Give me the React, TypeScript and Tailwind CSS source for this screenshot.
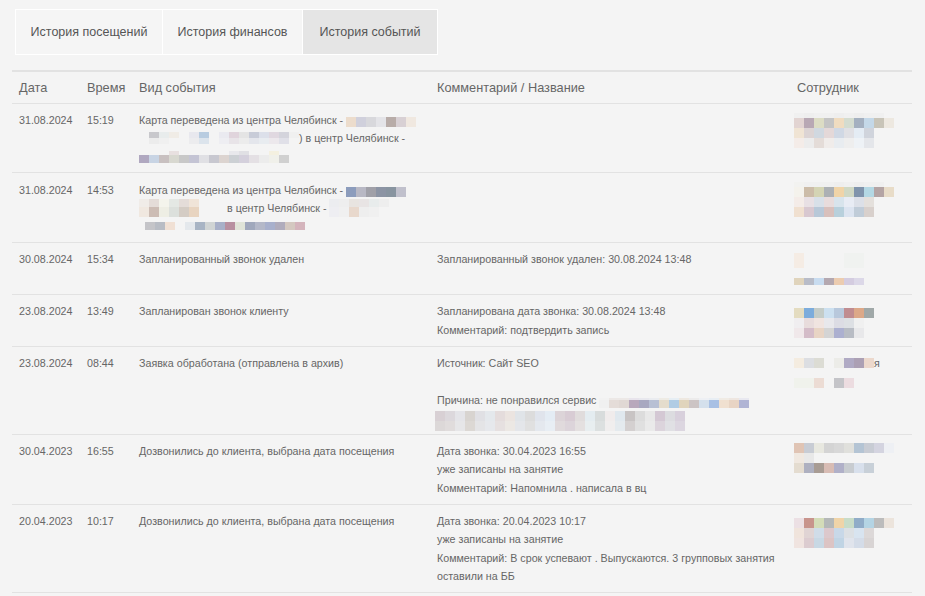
import React from "react";

type MRow = [number, string[]];

function Mosaic({ rows, className = "" }: { rows: MRow[]; className?: string }) {
  return (
    <div className={"flex flex-col shrink-0 " + className}>
      {rows.map(([h, cs], i) => (
        <div key={i} className="flex" style={{ height: h }}>
          {cs.map((c, j) => (
            <div key={j} className="w-[10px] h-full" style={{ background: c || "transparent" }} />
          ))}
        </div>
      ))}
    </div>
  );
}

function Line({ children, className = "" }: { children?: React.ReactNode; className?: string }) {
  return <div className={"flex items-center h-[18.3px] whitespace-nowrap " + className}>{children}</div>;
}

type Row = {
  date: string;
  time: string;
  event: React.ReactNode;
  comment: React.ReactNode;
  emp: React.ReactNode;
};

const rows: Row[] = [
  {
    date: "31.08.2024",
    time: "15:19",
    event: (
      <>
        <Line>
          <span>Карта переведена из центра Челябинск -&nbsp;</span>
          <Mosaic className="mt-[4px]" rows={[[10, ["#ecdccc", "#d0d0dc", "#d8d8dc", "#e4e4e8", "#b8aca8", "#d8d0d4", "#f0e8e0"]]]} />
        </Line>
        <Line>
          <Mosaic
            rows={[
              [6, ["", "#c8c8cc", "#e8ecec", "#f0ece6", "", "#e8e8ee", "#b8cce0", "", "#eaeaf0", "#e0d4dc", "#e4e4e4", "#c8ccd8", "#dce0ea", "#e0d8e0", "#d4d4dc", "#f0f0f0"]],
              [6, ["", "#ececec", "#f0f0f0", "", "", "#ececee", "#dce4ec", "", "#eeeef2", "#e8e4e8", "#ececec", "#e4e6ec", "#e8ecf0", "#ece8ec", "#e0e0e8", ""]],
            ]}
          />
          <span>) в центр Челябинск -</span>
        </Line>
        <Line>
          <Mosaic
            className="mt-[2px]"
            rows={[
              [4, ["", "", "", "#e8e0e0", "", "", "", "", "", "#e8e8ec", "#e0e0e4", "", "", "#f4f0e0", ""]],
              [8, ["#b0a8c0", "#c8d4e4", "#c8c0c0", "#d8d8d0", "#c8c8c8", "#c4c4d4", "#e0e0e4", "#c8c8d0", "#dcd4d0", "#ccd0d4", "#d4d0dc", "#e4e0e4", "#ececec", "#f0f0ea", "#d0d0d0"]],
            ]}
          />
        </Line>
      </>
    ),
    comment: null,
    emp: (
      <Mosaic
        className="mt-[2px]"
        rows={[
          [5, ["#f0f0f0", "#eeeeee", "#f0f0f0", "#f0f0f0", "#eeeeee", "#f0f0f0", "#eeeeee", "#f0f0f0", "#f0f0f0", ""]],
          [10, ["#e2d4d2", "#b8a8b4", "#dcdcc4", "#c4c4c4", "#f0dcc0", "#d4dcd0", "#a4b0c0", "#c4d8e8", "#c8c4b8", "#ede8e0"]],
          [10, ["#f0e4d4", "#dcd4d4", "#d0d8e0", "#e4d8d8", "#d0d8e4", "#e0e0e4", "#e4ecf4", "#d0d4dc"]],
          [10, ["#f4ece8", "#ececec", "#e4dcd8", "#f0ecea", "#e8ecf0", "#eeeeee", "#eef2f6", "#e4e6ea"]],
        ]}
      />
    ),
  },
  {
    date: "31.08.2024",
    time: "14:53",
    event: (
      <>
        <Line>
          <span>Карта переведена из центра Челябинск -&nbsp;</span>
          <Mosaic className="mt-[4px]" rows={[[10, ["#8c9cbc", "#b8b8c4", "#a0a0a8", "#8c94a4", "#8894a0", "#c0c0cc"]]]} />
        </Line>
        <Line>
          <Mosaic
            rows={[
              [8, ["#f0ece8", "#e4dcd8", "#f4f4ec", "#e4e8e4", "#e4dcd8", "#f0e4d8"]],
              [10, ["#f0e8e0", "#ccbcb4", "#eeeee4", "#dce0dc", "#d4ccc4", "#e8d4c0"]],
            ]}
          />
          <span className="ml-[28px]">в центр Челябинск -</span>
          <Mosaic
            className="ml-[2px]"
            rows={[
              [8, ["#ecedf0", "#eeeeee", "#e8e4e0", "#e8e4e4", "#e8ecec", "#eeeeee"]],
              [10, ["#eeeef2", "#f0f0f0", "#e8d8cc", "#eeeeee", "#f0f0f0", ""]],
            ]}
          />
        </Line>
        <Line>
          <Mosaic
            className="ml-[6px]"
            rows={[[8, ["#c4c4c8", "#b8bcc4", "#f0e0d4", "#f4f4f4", "#e4e8ec", "#a8b4c4", "#d0d4d4", "#a8b0c8", "#b890a0", "#e0e4d8", "#a0a8bc", "#b4b8c8", "#a8b0cc", "#b0acbc", "#d4c8c0", "#d4b4bc"]]]}
          />
        </Line>
      </>
    ),
    comment: null,
    emp: (
      <Mosaic
        className="mt-[2px]"
        rows={[
          [5, ["#f2f2f0", "#f0f0f0", "#f0f0f0", "#f0f0f0", "#eeeeee", "#f0f0f0", "#eeeeee", "#f0f0f0", "#f0f0f0", ""]],
          [10, ["#f4f2ec", "#ccbca8", "#d4d4b4", "#acb0b4", "#f0d4a8", "#d0d8c4", "#8094ac", "#b4d8e4", "#b4a4a4", "#e8dcc8"]],
          [10, ["#f4ece8", "#e8e0e4", "#d8e0e8", "#e8dcdc", "#d8e4ec", "#e8ecf4", "#dce0e8", "#e4e0dc"]],
          [10, ["#f0e0d0", "#d8c8d0", "#b8c8d8", "#d8c0bc", "#b8d0dc", "#dce4f0", "#c0ccd8", "#d8d0cc"]],
        ]}
      />
    ),
  },
  {
    date: "30.08.2024",
    time: "15:34",
    event: <Line>Запланированный звонок удален</Line>,
    comment: <Line>Запланированный звонок удален: 30.08.2024 13:48</Line>,
    emp: (
      <Mosaic
        className="mt-[3px]"
        rows={[
          [15, ["#f5ece4", "", "", "", "", "#f0f2f0", "#f0f2f0"]],
          [10, []],
          [7, ["#e0d4bc", "#b8bcc8", "#c8dcf0", "#b4a8b0", "#ecccb0", "#d4cce0", "#dcd8e8"]],
          [2, []],
        ]}
      />
    ),
  },
  {
    date: "23.08.2024",
    time: "13:49",
    event: <Line>Запланирован звонок клиенту</Line>,
    comment: (
      <>
        <Line>Запланирована дата звонка: 30.08.2024 13:48</Line>
        <Line>Комментарий: подтвердить запись</Line>
      </>
    ),
    emp: (
      <Mosaic
        className="mt-[6px]"
        rows={[
          [10, ["#e4dcc0", "#7cacdc", "#c4ccc8", "#cce0f0", "#b8c8dc", "#c08c90", "#dca888", "#a0a8a8"]],
          [10, ["#f0eef0", "#e8dcdc", "#f0e4e0", "#e8e8ec", "#dcdce4", "#dde0e4", "#f0f0f0"]],
          [10, ["#f0e8ea", "#d4bcc8", "#e8d4c4", "#d4d4d4", "#acb0d0", "#b8bcc4", "#e8e8ea"]],
        ]}
      />
    ),
  },
  {
    date: "23.08.2024",
    time: "08:44",
    event: <Line>Заявка обработана (отправлена в архив)</Line>,
    comment: (
      <>
        <Line>Источник: Сайт SEO</Line>
        <Line />
        <Line>
          <span>Причина: не понравился сервис&nbsp;</span>
          <Mosaic
            className="mt-[6px]"
            rows={[
              [2, ["#f2f2f2", "#ece8e6", "#ece8e6", "#e8e4ec", "#e8e8ee", "#eaecf0", "#eeebe4", "#e6eef4", "#eee8e0", "#ecebeb", "#eef0f4", "#e8eef4", "#f0ebe4", "#eee6e0", "#e8e8f0"]],
              [8, ["#f0f0f0", "#e4dcd8", "#e0d8d4", "#b8a8bc", "#a8a8c0", "#b8c0d4", "#e4dccc", "#b0cce4", "#e0d4bc", "#ccc4c4", "#d4e0ec", "#a8c0e4", "#f0e0d0", "#e8d4c4", "#b0b4d4"]],
            ]}
          />
        </Line>
        <Line>
          <Mosaic
            className="-ml-[2px] mt-[7px]"
            rows={[
              [10, ["#d8d0d4", "#dcd8dc", "#e4e4e8", "#d8d4d0", "#e0e0e4", "#e4e8ec", "#e4dcdc", "#ebe4e0", "#e0e4e8", "#dcdcdc", "#e0e4ec", "#e4ecf4", "#dcd4d8", "#d8ccd4", "#e0dcdc", "#e4ecf0", "#d8dcdc", "#f0ecec", "#e0e8ee", "#c8c4c4", "#dcdcdc", "#e8e8e8", "#d4c8d4", "#dcdce0", "#d8d0dc"]],
              [10, ["#dcd8d8", "#e0dcdc", "#e6e6e8", "#dcd8d4", "#e4e4e6", "#e6e8ec", "#e6e0e0", "#ece8e4", "#e4e6ea", "#e0e0e0", "#e4e8ee", "#e8eef4", "#e0dadc", "#dcd4da", "#e4e0e0", "#e8eef0", "#dce0e0", "#f0eeee", "#e4eaee", "#d4d0d0", "#e0e0e0", "#eaeaea", "#dcd4dc", "#e0e0e4", "#dcd6e0"]],
            ]}
          />
        </Line>
      </>
    ),
    emp: (
      <div className="mt-[4px]">
        <div className="flex items-center h-[10px]">
          <Mosaic rows={[[10, ["#f4ece0", "#dcdee2", "#dcdcd4", "#f4f4f4", "#ecece8", "#b0aac4", "#aca0b4", "#ecd8cc"]]]} />
          <span className="leading-none">я</span>
        </div>
        <Mosaic className="mt-[10px]" rows={[[10, ["#f0f2ec", "#f0f2ec", "#ecdcd4", "#f4f4f4", "#c4c4c8", "#ecdce0"]]]} />
      </div>
    ),
  },
  {
    date: "30.04.2023",
    time: "16:55",
    event: <Line>Дозвонились до клиента, выбрана дата посещения</Line>,
    comment: (
      <>
        <Line>Дата звонка: 30.04.2023 16:55</Line>
        <Line>уже записаны на занятие</Line>
        <Line>Комментарий: Напомнила . написала в вц</Line>
      </>
    ),
    emp: (
      <Mosaic
        className="mt-[1px]"
        rows={[
          [10, ["#e0c4b4", "#c8ccd4", "#e8e8e0", "#d4d4d4", "#d8d8d8", "#e0e0dc", "#b4c4d4", "#c8ccd4", "#d4d4e0", "#eef0f4"]],
          [10, ["#f0e8e0", "#e8e8e8"]],
          [10, ["#e4dcd0", "#aeb0c0", "#a89c94", "#d8bcb4", "#b0b0c8", "#c8ccd0", "#d8e0ec", "#c8d0d8"]],
        ]}
      />
    ),
  },
  {
    date: "20.04.2023",
    time: "10:17",
    event: <Line>Дозвонились до клиента, выбрана дата посещения</Line>,
    comment: (
      <>
        <Line>Дата звонка: 20.04.2023 10:17</Line>
        <Line>уже записаны на занятие</Line>
        <Line>Комментарий: В срок успевают . Выпускаются. 3 групповых занятия</Line>
        <Line>оставили на ББ</Line>
      </>
    ),
    emp: (
      <Mosaic
        className="mt-[6px]"
        rows={[
          [10, ["#ece0e4", "#c8948c", "#d4dcb8", "#b4b8b8", "#f0d4a8", "#c8dcc8", "#90acc8", "#b4d4e4", "#bcbcbc", "#ece4dc"]],
          [10, ["#f0e4dc", "#e0d4d4", "#d0dce8", "#dcc8cc", "#c8d8e8", "#dce0e4", "#d8e4f0", "#dcd8d8"]],
          [10, ["#f0e4e0", "#dcccd0", "#c8d8e4", "#dcc4c4", "#c0d4e4", "#e0e4ec", "#d4dce8", "#d8d4d4"]],
        ]}
      />
    ),
  },
];

export default function App() {
  return (
    <div className="min-h-[596px] w-full bg-[#f4f4f4] font-['Liberation_Sans',Arial,sans-serif] text-[#666]">
      <div className="pl-[15px] pt-[9px]">
        <div className="flex h-[46px] text-[12.5px] text-[#555]">
          <div className="w-[148px] flex items-center justify-center border border-white bg-[#f5f5f5]">История посещений</div>
          <div className="w-[140px] flex items-center justify-center border-y border-r border-white bg-[#f5f5f5]">История финансов</div>
          <div className="w-[135px] flex items-center justify-center border-y border-r border-white bg-[#e5e5e5]">История событий</div>
        </div>
      </div>
      <div className="ml-[12px] mt-[15px] w-[900px]">
        <table className="w-full table-fixed border-collapse">
          <colgroup>
            <col className="w-[68px]" />
            <col className="w-[52px]" />
            <col className="w-[298px]" />
            <col className="w-[360px]" />
            <col className="w-[122px]" />
          </colgroup>
          <thead>
            <tr className="border-t-2 border-b border-[#e2e2e2] text-[12.75px] text-[#666]">
              <th className="h-[32px] px-[7px] text-left font-normal">Дата</th>
              <th className="px-[7px] text-left font-normal">Время</th>
              <th className="px-[7px] text-left font-normal">Вид события</th>
              <th className="px-[7px] text-left font-normal">Комментарий / Название</th>
              <th className="px-[7px] text-left font-normal">Сотрудник</th>
            </tr>
          </thead>
          <tbody className="text-[10.7px]">
            {rows.map((r, i) => (
              <tr key={i} className="border-b border-[#e2e2e2] align-top">
                <td className="px-[7px] py-[7px]">
                  <Line>{r.date}</Line>
                </td>
                <td className="px-[7px] py-[7px]">
                  <Line>{r.time}</Line>
                </td>
                <td className="px-[7px] py-[7px]">{r.event}</td>
                <td className="px-[7px] py-[7px]">{r.comment}</td>
                <td className="px-[4px] py-[7px]">{r.emp}</td>
              </tr>
            ))}
          </tbody>
        </table>
      </div>
    </div>
  );
}
